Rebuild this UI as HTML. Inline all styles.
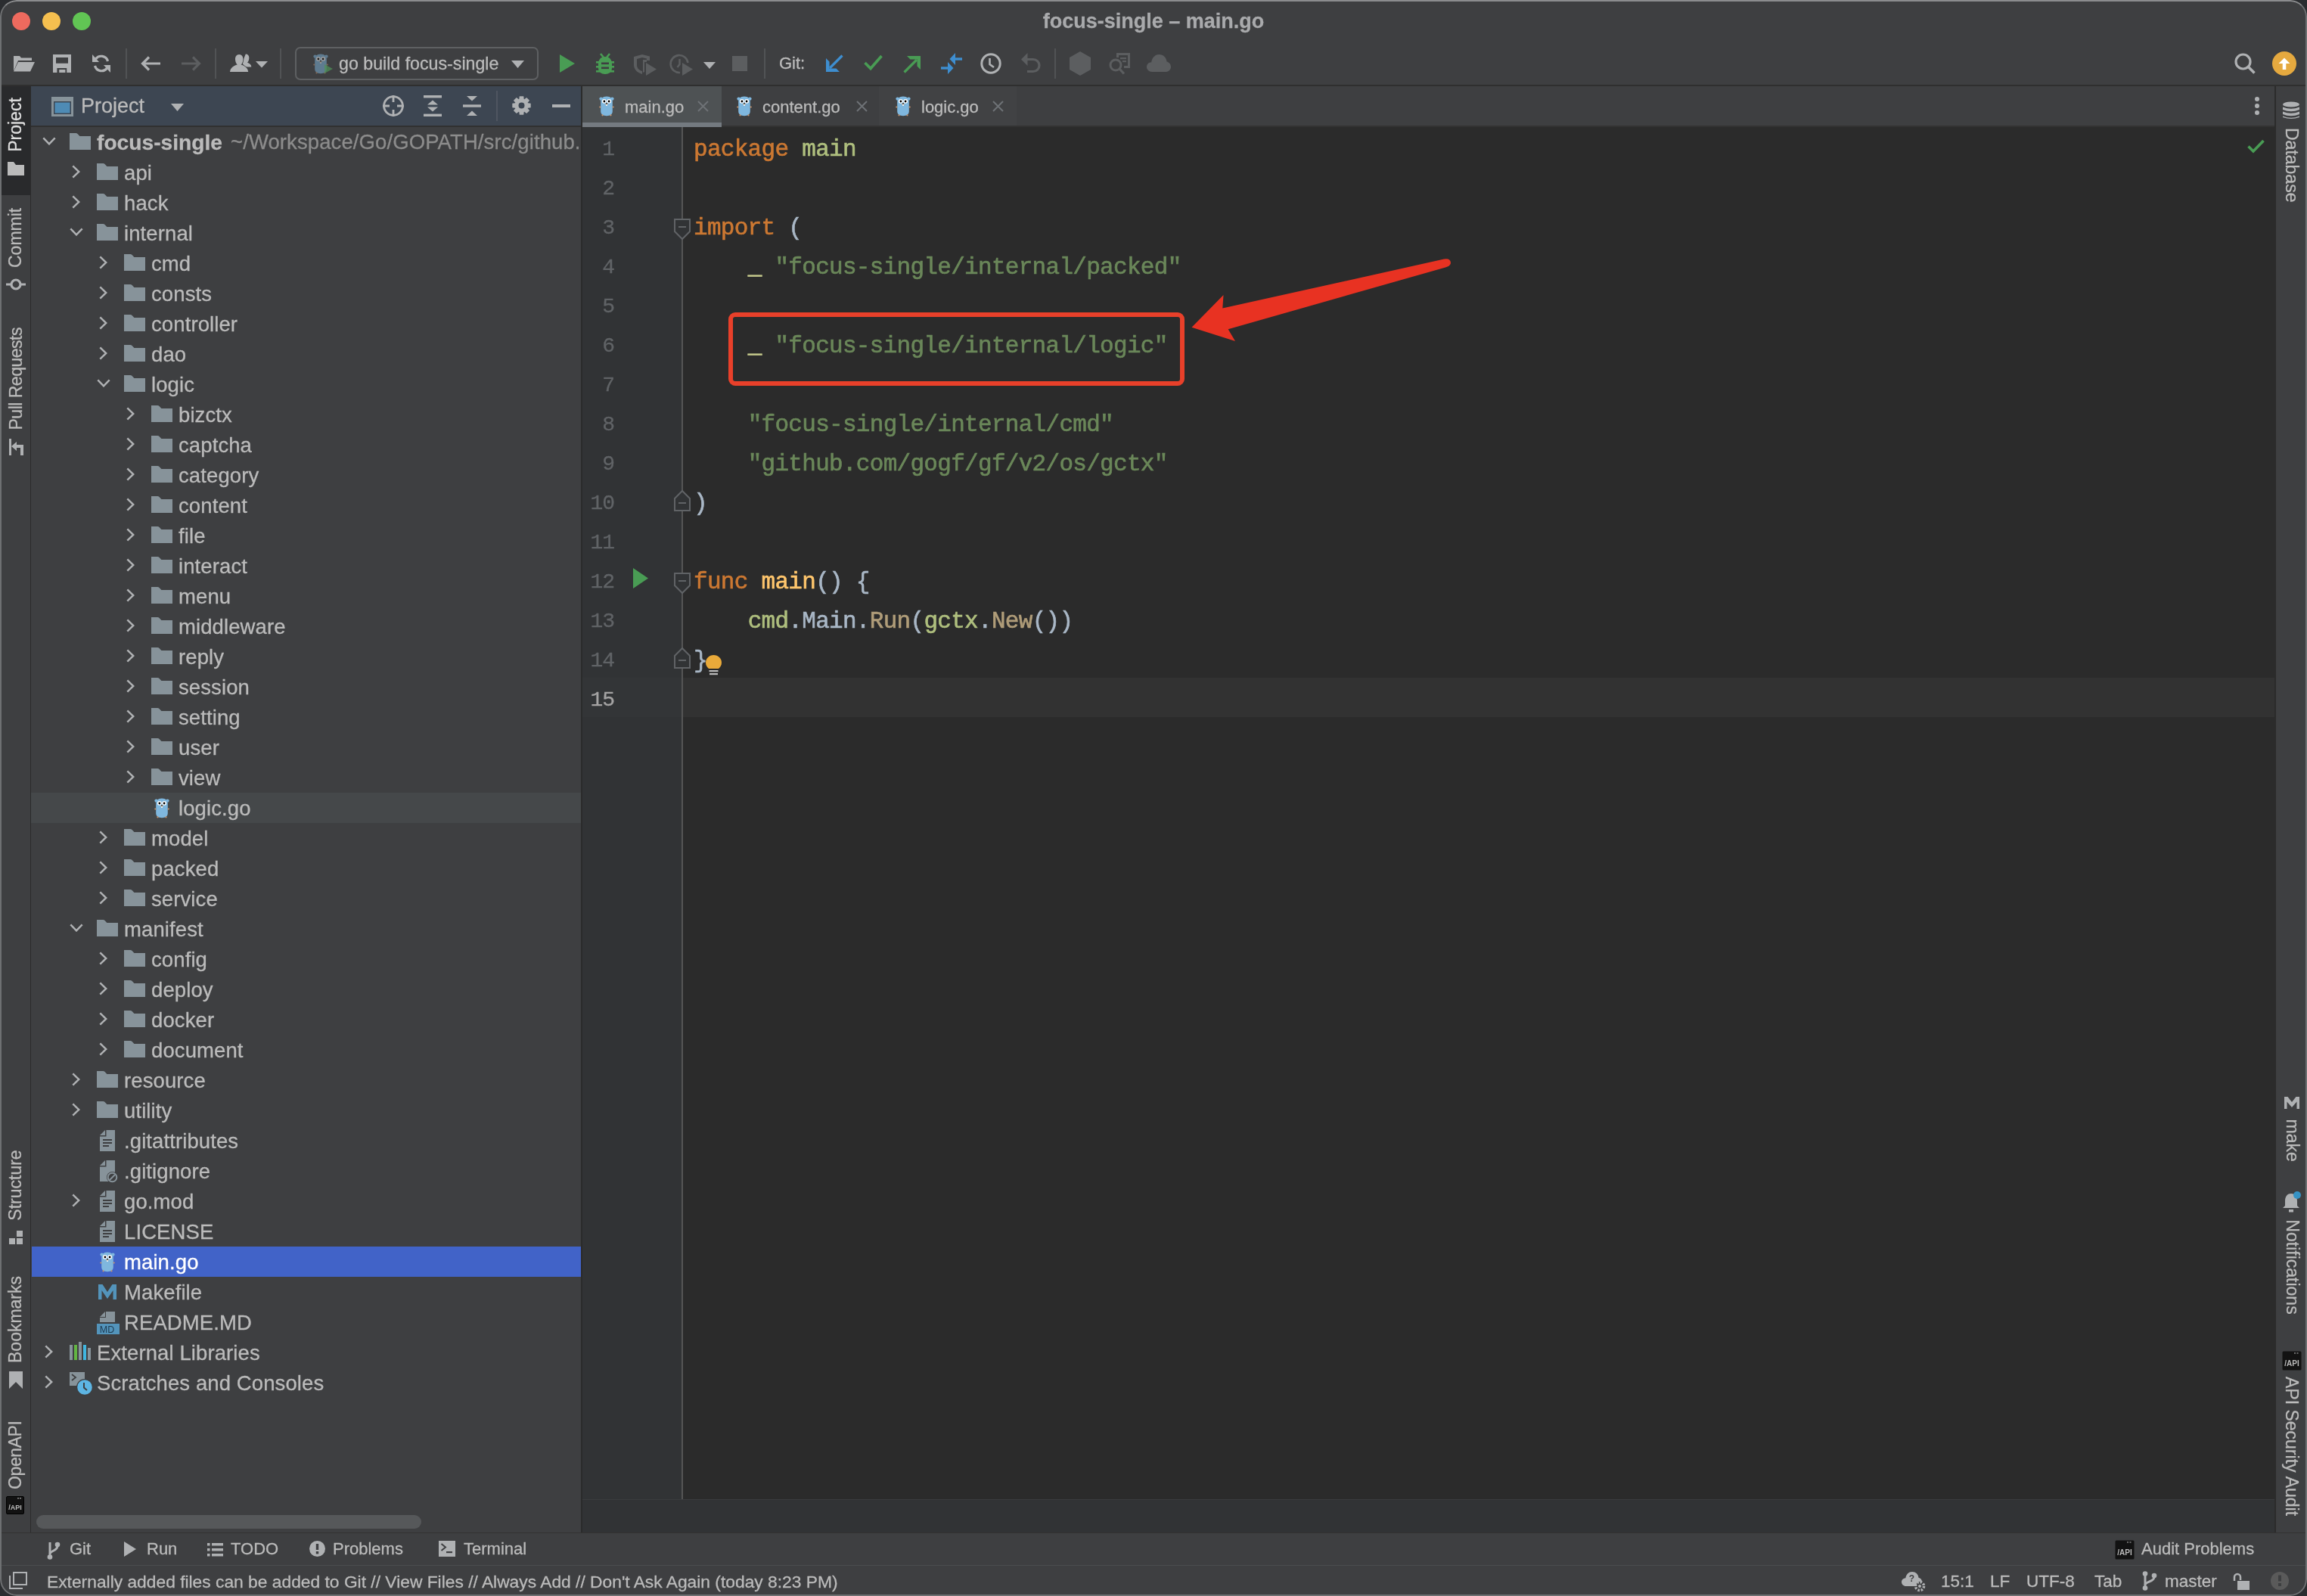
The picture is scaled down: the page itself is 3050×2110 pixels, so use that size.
<!DOCTYPE html>
<html><head><meta charset="utf-8"><title>focus-single – main.go</title>
<style>
html,body{margin:0;padding:0;width:3050px;height:2110px;overflow:hidden;background:#2b2d30;}
*{box-sizing:border-box;}
.abs{position:absolute;}
#win{position:absolute;left:0;top:0;width:3050px;height:2110px;border-radius:22px;overflow:hidden;background:#3e3f41;will-change:transform;
 font-family:"Liberation Sans", sans-serif;color:#bbbbbb;}
.t{position:absolute;white-space:nowrap;font-family:"Liberation Sans", sans-serif;-webkit-text-stroke:0.3px currentColor;}
.code{position:absolute;white-space:pre;font-family:"Liberation Mono", monospace;font-size:31px;letter-spacing:-0.7px;line-height:52px;-webkit-text-stroke:0.6px currentColor;}
svg{position:absolute;overflow:visible;}
</style></head><body>
<div id="win">
<svg width="0" height="0" style="position:absolute">
<defs>
<symbol id="gopher" viewBox="0 0 20 28">
 <circle cx="2.6" cy="4.6" r="2.2" fill="#7fb7de"/>
 <circle cx="17.4" cy="4.6" r="2.2" fill="#7fb7de"/>
 <path d="M10 1.5 C15.5 1.5 17.8 4.5 17.8 9 L17.8 21 C17.8 25.5 14.5 27.2 10 27.2 C5.5 27.2 2.2 25.5 2.2 21 L2.2 9 C2.2 4.5 4.5 1.5 10 1.5 Z" fill="#7fb7de"/>
 <circle cx="1.3" cy="15.5" r="1.1" fill="#c8946c"/><circle cx="18.7" cy="15.5" r="1.1" fill="#c8946c"/>
 <circle cx="4.5" cy="26.3" r="1.1" fill="#c8946c"/><circle cx="15.5" cy="26.3" r="1.1" fill="#c8946c"/>
 <circle cx="6.8" cy="7.8" r="2.9" fill="#fff"/><circle cx="13.2" cy="7.8" r="2.9" fill="#fff"/>
 <circle cx="6.9" cy="8" r="1.4" fill="#000"/><circle cx="13.1" cy="8" r="1.4" fill="#000"/>
 <ellipse cx="10" cy="11.6" rx="1.6" ry="1.2" fill="#d9b89a"/>
 <ellipse cx="10" cy="10.8" rx="0.9" ry="0.7" fill="#000"/>
 <rect x="9.2" y="12.4" width="1.6" height="1.6" fill="#fff"/>
</symbol>
<symbol id="folder" viewBox="0 0 28 22">
 <path d="M0 0 H8.3 Q9.6 0 10.6 1.1 L13.4 3.9 H28 V22 H0 Z" fill="#87939a"/>
</symbol>
<symbol id="file" viewBox="0 0 20 28">
 <path d="M8.5 0 H20 V28 H0 V8.5 H8.5 Z" fill="#87939a"/>
 <path d="M0 7 L7 0 V7 Z" fill="#87939a"/>
 <rect x="4" y="12" width="12" height="2" fill="#3e3f41"/>
 <rect x="4" y="16" width="12" height="2" fill="#3e3f41"/>
 <rect x="4" y="20" width="8" height="2" fill="#3e3f41"/>
</symbol>
<symbol id="chevr" viewBox="0 0 11 18"><path d="M1.3 1.3 L9.3 9 L1.3 16.7" fill="none" stroke="#afb1b3" stroke-width="2.5"/></symbol>
<symbol id="chevd" viewBox="0 0 18 11"><path d="M1.3 1.3 L9 9.3 L16.7 1.3" fill="none" stroke="#afb1b3" stroke-width="2.5"/></symbol>
</defs></svg>
<div class="abs" style="left:0;top:0;width:3050px;height:2110px;border:2px solid #6e7072;border-top-color:#8b8c8e;border-radius:22px;z-index:50;pointer-events:none"></div><div class="abs" style="left:16px;top:16px;width:24px;height:24px;border-radius:50%;background:#ee6a5e"></div><div class="abs" style="left:56px;top:16px;width:24px;height:24px;border-radius:50%;background:#f5bf4f"></div><div class="abs" style="left:96px;top:16px;width:24px;height:24px;border-radius:50%;background:#61c554"></div><div class="t" style="left:0;width:3050px;top:10px;text-align:center;font-weight:bold;font-size:27px;line-height:36px;color:#a9aaac">focus-single – main.go</div><div class="abs" style="left:0;top:112px;width:3050px;height:2px;background:#2f2f2f"></div><svg style="left:18px;top:74px" width="28" height="21" viewBox="0 0 28 21"><path d="M0 0 H8 L10 2.5 H24 V6 H6 L0 20 Z" fill="#afb1b3"/><path d="M6 8 H28 L22 20.5 H0 Z" fill="#afb1b3"/></svg><svg style="left:70px;top:72px" width="24" height="24" viewBox="0 0 24 24"><path d="M0 0 H24 V24 H0 Z M4 4 V11.7 H20 V4 Z M5.4 18 V24 H18.2 V18 Z" fill="#afb1b3" fill-rule="evenodd"/><rect x="8.2" y="20" width="8.2" height="4" fill="#afb1b3"/></svg><svg style="left:122px;top:72px" width="24" height="24" viewBox="0 0 24 24"><path d="M20.5 9 A9 9 0 0 0 4.5 6" fill="none" stroke="#afb1b3" stroke-width="3.2"/><path d="M0 0 L0 10 L9 10 Z" fill="#afb1b3"/><path d="M3.5 15 A9 9 0 0 0 19.5 18" fill="none" stroke="#afb1b3" stroke-width="3.2"/><path d="M24 24 L24 14 L15 14 Z" fill="#afb1b3"/></svg><div class="abs" style="left:166px;top:64px;width:2px;height:40px;background:#515355"></div><div class="abs" style="left:284px;top:64px;width:2px;height:40px;background:#515355"></div><div class="abs" style="left:370px;top:64px;width:2px;height:40px;background:#515355"></div><div class="abs" style="left:1010px;top:64px;width:2px;height:40px;background:#515355"></div><div class="abs" style="left:1394px;top:64px;width:2px;height:40px;background:#515355"></div><svg style="left:186px;top:74px" width="26" height="20" viewBox="0 0 26 20"><path d="M26 10 H3 M11 1.5 L2.5 10 L11 18.5" fill="none" stroke="#afb1b3" stroke-width="3.2"/></svg><svg style="left:240px;top:74px" width="26" height="20" viewBox="0 0 26 20"><path d="M0 10 H23 M15 1.5 L23.5 10 L15 18.5" fill="none" stroke="#5c5e60" stroke-width="3.2"/></svg><svg style="left:304px;top:71px" width="50" height="25" viewBox="0 0 50 25"><path d="M20.8 0.5 C24 0.5 25.6 3 25.3 6.3 C25.1 8.8 24.2 10.6 23 11.8 C26.2 12.8 28.3 14.8 28.3 17.5 H20 L16 12 Z" fill="#afb1b3"/><path d="M12.2 1 C15.8 1 17.6 4 17.4 7.8 C17.2 11 16 13.3 14.6 14.6 C19.5 16 23.5 18.5 24.2 24 H0 C0.7 18.5 4.7 16 9.8 14.6 C8.4 13.3 7.2 11 7 7.8 C6.8 4 8.6 1 12.2 1 Z" fill="#afb1b3" stroke="#3e3f41" stroke-width="1.8" paint-order="stroke"/><path d="M34 10 H50 L42 18.5 Z" fill="#afb1b3"/></svg><div class="abs" style="left:390px;top:62px;width:322px;height:44px;border:2px solid #5e6062;border-radius:7px"></div><svg style="left:414px;top:70px" width="26" height="28" viewBox="0 0 26 28"><use href="#gopher" x="0" y="0" width="20" height="28" style="opacity:0.5"/><path d="M15 15 L26 21 L15 27 Z" fill="#4f8f58" opacity="0.75"/></svg><div class="t" style="left:448px;top:64px;font-size:23.2px;line-height:40px;color:#bbbbbb">go build focus-single</div><svg style="left:676px;top:80px" width="17" height="10" viewBox="0 0 17 10"><path d="M0 0 H17 L8.5 10 Z" fill="#afb1b3"/></svg><svg style="left:740px;top:72px" width="20" height="24" viewBox="0 0 20 24"><path d="M0 0 L20 12 L0 24 Z" fill="#499c54"/></svg><svg style="left:788px;top:70px" width="24" height="28" viewBox="0 0 24 28"><path d="M6 1 L10 6 M18 1 L14 6" stroke="#499c54" stroke-width="2.6" fill="none"/>
<path d="M12 5 C18 5 21 9 21 15 L21 20 C21 25 17 28 12 28 C7 28 3 25 3 20 L3 15 C3 9 6 5 12 5 Z" fill="#499c54"/>
<rect x="0" y="11" width="24" height="2.6" fill="#499c54"/><rect x="0" y="17" width="24" height="2.6" fill="#499c54"/><rect x="0" y="23" width="24" height="2.6" fill="#499c54"/>
<rect x="7" y="12.5" width="10" height="2.6" fill="#3e3f41"/><rect x="7" y="18.5" width="10" height="2.6" fill="#3e3f41"/></svg><svg style="left:838px;top:72px" width="30" height="28" viewBox="0 0 30 28"><path d="M11 0 L21 2.5 V8 H17 V5.5 L11 4 L4 6 V14 C4 18 7 21 11 22 L11 26 C4 24 0 19 0 14 V3 Z" fill="#5c5e60"/><path d="M12 7 H17 V10 H14 V23 L12 24 Z" fill="#5c5e60"/><path d="M16 11 L30 19.5 L16 28 Z" fill="#5c5e60"/></svg><svg style="left:886px;top:72px" width="30" height="28" viewBox="0 0 30 28"><path d="M13 24 A11.5 11.5 0 1 1 23.5 11" fill="none" stroke="#5c5e60" stroke-width="2.6"/><path d="M12.5 6 V13 L9.5 17" fill="none" stroke="#5c5e60" stroke-width="2.4"/><path d="M16 11 L30 19.5 L16 28 Z" fill="#5c5e60"/></svg><svg style="left:930px;top:82px" width="16" height="9" viewBox="0 0 16 9"><path d="M0 0 H16 L8 9 Z" fill="#afb1b3"/></svg><div class="abs" style="left:968px;top:74px;width:20px;height:20px;background:#5c5e60"></div><div class="t" style="left:1030px;top:64px;font-size:22px;line-height:40px;color:#bbbbbb">Git:</div><svg style="left:1092px;top:72px" width="23" height="23" viewBox="0 0 23 23"><path d="M21.5 1.5 L5 18" stroke="#3e8ed0" stroke-width="3.2" fill="none"/><path d="M0 5 V23 H18 L13.5 18.5 H4.5 V9.5 Z" fill="#3e8ed0"/></svg><svg style="left:1142px;top:72px" width="25" height="22" viewBox="0 0 25 22"><path d="M1.5 11 L9 18.5 L23.5 2" stroke="#499c54" stroke-width="3.6" fill="none"/></svg><svg style="left:1194px;top:74px" width="23" height="23" viewBox="0 0 23 23"><path d="M1.5 21.5 L18 5" stroke="#499c54" stroke-width="3.2" fill="none"/><path d="M5 0 H23 V18 L18.5 13.5 V4.5 H9.5 Z" fill="#499c54"/></svg><svg style="left:1244px;top:70px" width="28" height="28" viewBox="0 0 28 28"><path d="M28 8 H17" stroke="#3e8ed0" stroke-width="3.4"/><path d="M19 0 V16 L11.5 8 Z" fill="#3e8ed0"/><path d="M0 20 H11" stroke="#3e8ed0" stroke-width="3.4"/><path d="M9 12 V28 L16.5 20 Z" fill="#3e8ed0"/></svg><svg style="left:1296px;top:70px" width="28" height="28" viewBox="0 0 28 28"><circle cx="14" cy="14" r="12.2" fill="none" stroke="#afb1b3" stroke-width="3"/><path d="M12.5 7 V15 L18 19" fill="none" stroke="#afb1b3" stroke-width="2.6"/></svg><svg style="left:1350px;top:70px" width="26" height="26" viewBox="0 0 26 26"><path d="M0 8.5 L8.5 0 V17 Z" fill="#5c5e60"/><path d="M7 8.5 H16 A8 8 0 0 1 16 24.5 H8" fill="none" stroke="#5c5e60" stroke-width="3.2"/></svg><svg style="left:1414px;top:68px" width="28" height="32" viewBox="0 0 28 32"><path d="M14 0 L28 8 V24 L14 32 L0 24 V8 Z" fill="#5c5e60"/></svg><svg style="left:1466px;top:70px" width="28" height="29" viewBox="0 0 28 29"><path d="M10 0 H28 V20 H20 V17 H25 V3 H13 V6 H10 Z" fill="#5c5e60"/><rect x="15" y="6" width="8" height="2.2" fill="#5c5e60"/><rect x="18" y="10" width="5" height="2.2" fill="#5c5e60"/><circle cx="9" cy="16" r="7" fill="none" stroke="#5c5e60" stroke-width="3"/><path d="M14 21 L20 27.5" stroke="#5c5e60" stroke-width="3.2"/></svg><svg style="left:1516px;top:72px" width="32" height="23" viewBox="0 0 32 23"><path d="M7 23 C3 23 0 20 0 16.5 C0 13 2.8 10.3 6.2 10.2 C6.8 4.5 11 0 16.5 0 C22 0 26 4 26.5 9.6 C29.7 10.3 32 13 32 16.5 C32 20 29 23 25.5 23 Z" fill="#5c5e60"/></svg><svg style="left:2954px;top:70px" width="28" height="28" viewBox="0 0 28 28"><circle cx="11.5" cy="11.5" r="9.5" fill="none" stroke="#afb1b3" stroke-width="3.2"/><path d="M18 18 L26.5 26.5" stroke="#afb1b3" stroke-width="3.6"/></svg><svg style="left:3004px;top:68px" width="32" height="32" viewBox="0 0 32 32"><circle cx="16" cy="16" r="16" fill="#e5a93f"/><path d="M16 8.5 L23.5 16 H18.3 V24 H13.7 V16 H8.5 Z" fill="#fff"/></svg><div class="abs" style="left:0;top:114px;width:40px;height:1912px;background:#3e3f41"></div><div class="abs" style="left:40px;top:114px;width:1px;height:1912px;background:#2b2b2b"></div><div class="abs" style="left:2px;top:114px;width:38px;height:144px;background:#292a2c"></div><div class="t" style="left:-17.0px;top:150.0px;width:74px;height:30px;line-height:30px;text-align:center;font-size:23px;letter-spacing:0px;color:#e0e0e0;transform:rotate(-90deg)">Project</div><svg style="left:10px;top:214px" width="22" height="18" viewBox="0 0 22 18"><path d="M0 0 H8 L11 4 H22 V18 H0 Z" fill="#bbbbbb"/></svg><div class="t" style="left:-19.0px;top:300.0px;width:78px;height:30px;line-height:30px;text-align:center;font-size:23px;letter-spacing:0px;color:#bbbbbb;transform:rotate(-90deg)">Commit</div><svg style="left:8px;top:368px" width="26" height="16" viewBox="0 0 26 16"><path d="M0 8 H26" stroke="#afb1b3" stroke-width="3"/><circle cx="13" cy="8" r="6" fill="#3e3f41" stroke="#afb1b3" stroke-width="3.2"/></svg><div class="t" style="left:-47.5px;top:485.5px;width:135px;height:30px;line-height:30px;text-align:center;font-size:23px;letter-spacing:-0.5px;color:#bbbbbb;transform:rotate(-90deg)">Pull Requests</div><svg style="left:12px;top:580px" width="20" height="22" viewBox="0 0 20 22"><path d="M1.5 0 V22" stroke="#afb1b3" stroke-width="3"/><path d="M3 10 L10 4 V8 H19 V22 H15 V12 H10 V16 Z" fill="#afb1b3"/></svg><div class="t" style="left:-27.0px;top:1552.0px;width:94px;height:30px;line-height:30px;text-align:center;font-size:23px;letter-spacing:0px;color:#bbbbbb;transform:rotate(-90deg)">Structure</div><svg style="left:12px;top:1627px" width="18" height="19" viewBox="0 0 18 19"><rect x="0" y="10" width="8" height="8" fill="#afb1b3"/><rect x="10" y="10" width="8" height="8" fill="#afb1b3"/><rect x="10" y="0" width="8" height="8" fill="#afb1b3"/></svg><div class="t" style="left:-36.0px;top:1731.0px;width:112px;height:30px;line-height:30px;text-align:center;font-size:23px;letter-spacing:0px;color:#bbbbbb;transform:rotate(-90deg)">Bookmarks</div><svg style="left:12px;top:1813px" width="18" height="23" viewBox="0 0 18 23"><path d="M0 0 H18 V23 L9 14 L0 23 Z" fill="#afb1b3"/></svg><div class="t" style="left:-24.0px;top:1910.0px;width:88px;height:30px;line-height:30px;text-align:center;font-size:23px;letter-spacing:-0.4px;color:#bbbbbb;transform:rotate(-90deg)">OpenAPI</div><svg style="left:8px;top:1978px" width="24" height="24" viewBox="0 0 24 24"><rect x="0.5" y="0.5" width="23" height="23" rx="1.5" fill="#121212" stroke="#000" stroke-width="1"/><rect x="2" y="5" width="20" height="17" fill="#3e3f41" opacity="0"/><text x="12" y="18" font-size="9" font-family="Liberation Sans" font-weight="bold" fill="#bbbbbb" text-anchor="middle">/API</text><rect x="15" y="2" width="2" height="1.5" fill="#888"/><rect x="18" y="2" width="2" height="1.5" fill="#888"/></svg><div class="abs" style="left:41px;top:114px;width:727px;height:52px;background:#3d4652"></div><div class="abs" style="left:41px;top:166px;width:727px;height:2px;background:#303030"></div><svg style="left:68px;top:128px" width="29" height="26" viewBox="0 0 29 26"><rect x="0" y="0" width="29" height="26" fill="#87939a"/><rect x="3" y="6" width="23" height="17" fill="#3d4652"/><rect x="4.5" y="7.5" width="20" height="14" fill="#4e8bb5"/></svg><div class="t" style="left:107px;top:120px;font-size:27px;line-height:40px;color:#bbbbbb">Project</div><svg style="left:226px;top:137px" width="17" height="10" viewBox="0 0 17 10"><path d="M0 0 H17 L8.5 10 Z" fill="#afb1b3"/></svg><svg style="left:506px;top:126px" width="28" height="28" viewBox="0 0 28 28"><circle cx="14" cy="14" r="12.4" fill="none" stroke="#afb1b3" stroke-width="2.8"/><path d="M14 0 V9 M14 19 V28 M0 14 H9 M19 14 H28" stroke="#afb1b3" stroke-width="2.8"/></svg><svg style="left:560px;top:126px" width="24" height="28" viewBox="0 0 24 28"><rect x="0" y="0" width="24" height="3.4" fill="#afb1b3"/><rect x="0" y="24.6" width="24" height="3.4" fill="#afb1b3"/><path d="M12 6.5 L19 12.5 H5 Z M12 21.5 L19 15.5 H5 Z" fill="#afb1b3"/></svg><svg style="left:612px;top:127px" width="24" height="26" viewBox="0 0 24 26"><rect x="0" y="11.3" width="24" height="3.4" fill="#afb1b3"/><path d="M5 0 H19 L12 6.5 Z M5 26 H19 L12 19.5 Z" fill="#afb1b3"/></svg><div class="abs" style="left:656px;top:120px;width:2px;height:40px;background:#4f5560"></div><svg style="left:677px;top:127px" width="25" height="25" viewBox="0 0 25 25"><path d="M24.70 9.77 L24.70 15.23 L20.92 15.67 L20.70 16.21 L23.05 19.20 L19.20 23.05 L16.21 20.70 L15.67 20.92 L15.23 24.70 L9.77 24.70 L9.33 20.92 L8.79 20.70 L5.80 23.05 L1.95 19.20 L4.30 16.21 L4.08 15.67 L0.30 15.23 L0.30 9.77 L4.08 9.33 L4.30 8.79 L1.95 5.80 L5.80 1.95 L8.79 4.30 L9.33 4.08 L9.77 0.30 L15.23 0.30 L15.67 4.08 L16.21 4.30 L19.20 1.95 L23.05 5.80 L20.70 8.79 L20.92 9.33 Z M12.5 8.5 A4 4 0 1 0 12.5 16.5 A4 4 0 1 0 12.5 8.5 Z" fill="#afb1b3" fill-rule="evenodd"/></svg><div class="abs" style="left:730px;top:138px;width:24px;height:4px;background:#afb1b3"></div><div class="abs" style="left:41px;top:168px;width:727px;height:1858px;overflow:hidden"><svg style="left:15px;top:13px" width="18" height="11"><use href="#chevd" width="18" height="11"/></svg><svg style="left:51px;top:8px" width="28" height="22"><use href="#folder" width="28" height="22"/></svg><div class="t" style="left:87px;top:0px;font-size:28.2px;font-weight:bold;line-height:40px;color:#bbbbbb">focus-single</div><div class="t" style="left:264px;top:0px;font-size:27.5px;letter-spacing:0.1px;line-height:40px;color:#8c8c8c">~/Workspace/Go/GOPATH/src/github.com/gogf/focus-single</div><svg style="left:54px;top:50px" width="11" height="18"><use href="#chevr" width="11" height="18"/></svg><svg style="left:87px;top:48px" width="28" height="22"><use href="#folder" width="28" height="22"/></svg><div class="t" style="left:123px;top:41px;font-size:27.5px;letter-spacing:0.1px;line-height:40px;color:#bbbbbb">api</div><svg style="left:54px;top:90px" width="11" height="18"><use href="#chevr" width="11" height="18"/></svg><svg style="left:87px;top:88px" width="28" height="22"><use href="#folder" width="28" height="22"/></svg><div class="t" style="left:123px;top:81px;font-size:27.5px;letter-spacing:0.1px;line-height:40px;color:#bbbbbb">hack</div><svg style="left:51px;top:133px" width="18" height="11"><use href="#chevd" width="18" height="11"/></svg><svg style="left:87px;top:128px" width="28" height="22"><use href="#folder" width="28" height="22"/></svg><div class="t" style="left:123px;top:121px;font-size:27.5px;letter-spacing:0.1px;line-height:40px;color:#bbbbbb">internal</div><svg style="left:90px;top:170px" width="11" height="18"><use href="#chevr" width="11" height="18"/></svg><svg style="left:123px;top:168px" width="28" height="22"><use href="#folder" width="28" height="22"/></svg><div class="t" style="left:159px;top:161px;font-size:27.5px;letter-spacing:0.1px;line-height:40px;color:#bbbbbb">cmd</div><svg style="left:90px;top:210px" width="11" height="18"><use href="#chevr" width="11" height="18"/></svg><svg style="left:123px;top:208px" width="28" height="22"><use href="#folder" width="28" height="22"/></svg><div class="t" style="left:159px;top:201px;font-size:27.5px;letter-spacing:0.1px;line-height:40px;color:#bbbbbb">consts</div><svg style="left:90px;top:250px" width="11" height="18"><use href="#chevr" width="11" height="18"/></svg><svg style="left:123px;top:248px" width="28" height="22"><use href="#folder" width="28" height="22"/></svg><div class="t" style="left:159px;top:241px;font-size:27.5px;letter-spacing:0.1px;line-height:40px;color:#bbbbbb">controller</div><svg style="left:90px;top:290px" width="11" height="18"><use href="#chevr" width="11" height="18"/></svg><svg style="left:123px;top:288px" width="28" height="22"><use href="#folder" width="28" height="22"/></svg><div class="t" style="left:159px;top:281px;font-size:27.5px;letter-spacing:0.1px;line-height:40px;color:#bbbbbb">dao</div><svg style="left:87px;top:333px" width="18" height="11"><use href="#chevd" width="18" height="11"/></svg><svg style="left:123px;top:328px" width="28" height="22"><use href="#folder" width="28" height="22"/></svg><div class="t" style="left:159px;top:321px;font-size:27.5px;letter-spacing:0.1px;line-height:40px;color:#bbbbbb">logic</div><svg style="left:126px;top:370px" width="11" height="18"><use href="#chevr" width="11" height="18"/></svg><svg style="left:159px;top:368px" width="28" height="22"><use href="#folder" width="28" height="22"/></svg><div class="t" style="left:195px;top:361px;font-size:27.5px;letter-spacing:0.1px;line-height:40px;color:#bbbbbb">bizctx</div><svg style="left:126px;top:410px" width="11" height="18"><use href="#chevr" width="11" height="18"/></svg><svg style="left:159px;top:408px" width="28" height="22"><use href="#folder" width="28" height="22"/></svg><div class="t" style="left:195px;top:401px;font-size:27.5px;letter-spacing:0.1px;line-height:40px;color:#bbbbbb">captcha</div><svg style="left:126px;top:450px" width="11" height="18"><use href="#chevr" width="11" height="18"/></svg><svg style="left:159px;top:448px" width="28" height="22"><use href="#folder" width="28" height="22"/></svg><div class="t" style="left:195px;top:441px;font-size:27.5px;letter-spacing:0.1px;line-height:40px;color:#bbbbbb">category</div><svg style="left:126px;top:490px" width="11" height="18"><use href="#chevr" width="11" height="18"/></svg><svg style="left:159px;top:488px" width="28" height="22"><use href="#folder" width="28" height="22"/></svg><div class="t" style="left:195px;top:481px;font-size:27.5px;letter-spacing:0.1px;line-height:40px;color:#bbbbbb">content</div><svg style="left:126px;top:530px" width="11" height="18"><use href="#chevr" width="11" height="18"/></svg><svg style="left:159px;top:528px" width="28" height="22"><use href="#folder" width="28" height="22"/></svg><div class="t" style="left:195px;top:521px;font-size:27.5px;letter-spacing:0.1px;line-height:40px;color:#bbbbbb">file</div><svg style="left:126px;top:570px" width="11" height="18"><use href="#chevr" width="11" height="18"/></svg><svg style="left:159px;top:568px" width="28" height="22"><use href="#folder" width="28" height="22"/></svg><div class="t" style="left:195px;top:561px;font-size:27.5px;letter-spacing:0.1px;line-height:40px;color:#bbbbbb">interact</div><svg style="left:126px;top:610px" width="11" height="18"><use href="#chevr" width="11" height="18"/></svg><svg style="left:159px;top:608px" width="28" height="22"><use href="#folder" width="28" height="22"/></svg><div class="t" style="left:195px;top:601px;font-size:27.5px;letter-spacing:0.1px;line-height:40px;color:#bbbbbb">menu</div><svg style="left:126px;top:650px" width="11" height="18"><use href="#chevr" width="11" height="18"/></svg><svg style="left:159px;top:648px" width="28" height="22"><use href="#folder" width="28" height="22"/></svg><div class="t" style="left:195px;top:641px;font-size:27.5px;letter-spacing:0.1px;line-height:40px;color:#bbbbbb">middleware</div><svg style="left:126px;top:690px" width="11" height="18"><use href="#chevr" width="11" height="18"/></svg><svg style="left:159px;top:688px" width="28" height="22"><use href="#folder" width="28" height="22"/></svg><div class="t" style="left:195px;top:681px;font-size:27.5px;letter-spacing:0.1px;line-height:40px;color:#bbbbbb">reply</div><svg style="left:126px;top:730px" width="11" height="18"><use href="#chevr" width="11" height="18"/></svg><svg style="left:159px;top:728px" width="28" height="22"><use href="#folder" width="28" height="22"/></svg><div class="t" style="left:195px;top:721px;font-size:27.5px;letter-spacing:0.1px;line-height:40px;color:#bbbbbb">session</div><svg style="left:126px;top:770px" width="11" height="18"><use href="#chevr" width="11" height="18"/></svg><svg style="left:159px;top:768px" width="28" height="22"><use href="#folder" width="28" height="22"/></svg><div class="t" style="left:195px;top:761px;font-size:27.5px;letter-spacing:0.1px;line-height:40px;color:#bbbbbb">setting</div><svg style="left:126px;top:810px" width="11" height="18"><use href="#chevr" width="11" height="18"/></svg><svg style="left:159px;top:808px" width="28" height="22"><use href="#folder" width="28" height="22"/></svg><div class="t" style="left:195px;top:801px;font-size:27.5px;letter-spacing:0.1px;line-height:40px;color:#bbbbbb">user</div><svg style="left:126px;top:850px" width="11" height="18"><use href="#chevr" width="11" height="18"/></svg><svg style="left:159px;top:848px" width="28" height="22"><use href="#folder" width="28" height="22"/></svg><div class="t" style="left:195px;top:841px;font-size:27.5px;letter-spacing:0.1px;line-height:40px;color:#bbbbbb">view</div><div class="abs" style="left:0px;top:880px;width:727px;height:40px;background:#45484a"></div><svg style="left:163px;top:886px" width="20" height="28"><use href="#gopher" width="20" height="28"/></svg><div class="t" style="left:195px;top:881px;font-size:27.5px;letter-spacing:0.1px;line-height:40px;color:#bbbbbb">logic.go</div><svg style="left:90px;top:930px" width="11" height="18"><use href="#chevr" width="11" height="18"/></svg><svg style="left:123px;top:928px" width="28" height="22"><use href="#folder" width="28" height="22"/></svg><div class="t" style="left:159px;top:921px;font-size:27.5px;letter-spacing:0.1px;line-height:40px;color:#bbbbbb">model</div><svg style="left:90px;top:970px" width="11" height="18"><use href="#chevr" width="11" height="18"/></svg><svg style="left:123px;top:968px" width="28" height="22"><use href="#folder" width="28" height="22"/></svg><div class="t" style="left:159px;top:961px;font-size:27.5px;letter-spacing:0.1px;line-height:40px;color:#bbbbbb">packed</div><svg style="left:90px;top:1010px" width="11" height="18"><use href="#chevr" width="11" height="18"/></svg><svg style="left:123px;top:1008px" width="28" height="22"><use href="#folder" width="28" height="22"/></svg><div class="t" style="left:159px;top:1001px;font-size:27.5px;letter-spacing:0.1px;line-height:40px;color:#bbbbbb">service</div><svg style="left:51px;top:1053px" width="18" height="11"><use href="#chevd" width="18" height="11"/></svg><svg style="left:87px;top:1048px" width="28" height="22"><use href="#folder" width="28" height="22"/></svg><div class="t" style="left:123px;top:1041px;font-size:27.5px;letter-spacing:0.1px;line-height:40px;color:#bbbbbb">manifest</div><svg style="left:90px;top:1090px" width="11" height="18"><use href="#chevr" width="11" height="18"/></svg><svg style="left:123px;top:1088px" width="28" height="22"><use href="#folder" width="28" height="22"/></svg><div class="t" style="left:159px;top:1081px;font-size:27.5px;letter-spacing:0.1px;line-height:40px;color:#bbbbbb">config</div><svg style="left:90px;top:1130px" width="11" height="18"><use href="#chevr" width="11" height="18"/></svg><svg style="left:123px;top:1128px" width="28" height="22"><use href="#folder" width="28" height="22"/></svg><div class="t" style="left:159px;top:1121px;font-size:27.5px;letter-spacing:0.1px;line-height:40px;color:#bbbbbb">deploy</div><svg style="left:90px;top:1170px" width="11" height="18"><use href="#chevr" width="11" height="18"/></svg><svg style="left:123px;top:1168px" width="28" height="22"><use href="#folder" width="28" height="22"/></svg><div class="t" style="left:159px;top:1161px;font-size:27.5px;letter-spacing:0.1px;line-height:40px;color:#bbbbbb">docker</div><svg style="left:90px;top:1210px" width="11" height="18"><use href="#chevr" width="11" height="18"/></svg><svg style="left:123px;top:1208px" width="28" height="22"><use href="#folder" width="28" height="22"/></svg><div class="t" style="left:159px;top:1201px;font-size:27.5px;letter-spacing:0.1px;line-height:40px;color:#bbbbbb">document</div><svg style="left:54px;top:1250px" width="11" height="18"><use href="#chevr" width="11" height="18"/></svg><svg style="left:87px;top:1248px" width="28" height="22"><use href="#folder" width="28" height="22"/></svg><div class="t" style="left:123px;top:1241px;font-size:27.5px;letter-spacing:0.1px;line-height:40px;color:#bbbbbb">resource</div><svg style="left:54px;top:1290px" width="11" height="18"><use href="#chevr" width="11" height="18"/></svg><svg style="left:87px;top:1288px" width="28" height="22"><use href="#folder" width="28" height="22"/></svg><div class="t" style="left:123px;top:1281px;font-size:27.5px;letter-spacing:0.1px;line-height:40px;color:#bbbbbb">utility</div><svg style="left:91px;top:1326px" width="20" height="28"><use href="#file" width="20" height="28"/></svg><div class="t" style="left:123px;top:1321px;font-size:27.5px;letter-spacing:0.1px;line-height:40px;color:#bbbbbb">.gitattributes</div><svg style="left:91px;top:1366px" width="26" height="30" viewBox="0 0 26 30"><path d="M8.5 0 H20 V28 H0 V8.5 H8.5 Z" fill="#87939a"/><path d="M0 7 L7 0 V7 Z" fill="#87939a"/><circle cx="16.5" cy="22.5" r="7.5" fill="#3e3f41"/><circle cx="16.5" cy="22.5" r="5.8" fill="none" stroke="#87939a" stroke-width="2"/><path d="M13 26 L20 19" stroke="#87939a" stroke-width="2"/></svg><div class="t" style="left:123px;top:1361px;font-size:27.5px;letter-spacing:0.1px;line-height:40px;color:#bbbbbb">.gitignore</div><svg style="left:54px;top:1410px" width="11" height="18"><use href="#chevr" width="11" height="18"/></svg><svg style="left:91px;top:1406px" width="20" height="28"><use href="#file" width="20" height="28"/></svg><div class="t" style="left:123px;top:1401px;font-size:27.5px;letter-spacing:0.1px;line-height:40px;color:#bbbbbb">go.mod</div><svg style="left:91px;top:1446px" width="20" height="28"><use href="#file" width="20" height="28"/></svg><div class="t" style="left:123px;top:1441px;font-size:27.5px;letter-spacing:0.1px;line-height:40px;color:#bbbbbb">LICENSE</div><div class="abs" style="left:1px;top:1480px;width:726px;height:40px;background:#4163c8"></div><svg style="left:91px;top:1486px" width="20" height="28"><use href="#gopher" width="20" height="28"/></svg><div class="t" style="left:123px;top:1481px;font-size:27.5px;letter-spacing:0.1px;line-height:40px;color:#ffffff">main.go</div><svg style="left:89px;top:1530px" width="24" height="20" viewBox="0 0 24 20"><path d="M0 20 V0 H5.5 L12 10 L18.5 0 H24 V20 H19.5 V8 L12 19 L4.5 8 V20 Z" fill="#5394bb"/></svg><div class="t" style="left:123px;top:1521px;font-size:27.5px;letter-spacing:0.1px;line-height:40px;color:#bbbbbb">Makefile</div><svg style="left:87px;top:1566px" width="30" height="30" viewBox="0 0 30 30"><path d="M12 0 H24 V14 H4 V8 H12 Z" fill="#87939a"/><path d="M4 7 L11 0 V7 Z" fill="#87939a"/><rect x="0" y="16" width="30" height="14" fill="#5394bb"/><text x="13.5" y="28" font-size="12.5" font-family="Liberation Sans" fill="#1e3a4f" text-anchor="middle" style="-webkit-text-stroke:0.5px #1e3a4f">MD</text></svg><div class="t" style="left:123px;top:1561px;font-size:27.5px;letter-spacing:0.1px;line-height:40px;color:#bbbbbb">README.MD</div><svg style="left:18px;top:1610px" width="11" height="18"><use href="#chevr" width="11" height="18"/></svg><svg style="left:51px;top:1606px" width="28" height="24" viewBox="0 0 28 24"><rect x="0" y="4" width="4" height="20" fill="#87939a"/><rect x="6" y="4" width="4" height="20" fill="#62b543"/><rect x="12" y="0" width="4" height="24" fill="#87939a"/><rect x="18" y="4" width="4" height="20" fill="#40b6e0"/><rect x="24" y="8" width="4" height="16" fill="#87939a"/></svg><div class="t" style="left:87px;top:1601px;font-size:27.5px;letter-spacing:0.1px;line-height:40px;color:#bbbbbb">External Libraries</div><svg style="left:18px;top:1650px" width="11" height="18"><use href="#chevr" width="11" height="18"/></svg><svg style="left:51px;top:1646px" width="30" height="30" viewBox="0 0 30 30"><rect x="0" y="0" width="20" height="18" fill="#87939a"/><path d="M3 3 L8 7 L3 11" fill="none" stroke="#3e3f41" stroke-width="1.8"/><circle cx="20" cy="20" r="11" fill="#3e3f41"/><circle cx="20" cy="20" r="9.8" fill="#5db5e3"/><path d="M19 14 V20.5 L23 24" fill="none" stroke="#3e3f41" stroke-width="2"/></svg><div class="t" style="left:87px;top:1641px;font-size:27.5px;letter-spacing:0.1px;line-height:40px;color:#bbbbbb">Scratches and Consoles</div></div><div class="abs" style="left:48px;top:2003px;width:509px;height:18px;border-radius:9px;background:#56585a"></div><div class="abs" style="left:768px;top:114px;width:2px;height:1912px;background:#2b2b2b"></div><div class="abs" style="left:770px;top:114px;width:2237px;height:52px;background:#3e3f41"></div><div class="abs" style="left:770px;top:166px;width:2237px;height:2px;background:#323232"></div><div class="abs" style="left:1162px;top:114px;width:182px;height:52px;background:#414244"></div><div class="abs" style="left:770px;top:114px;width:184px;height:54px;background:#4e5254"></div><div class="abs" style="left:770px;top:162px;width:184px;height:6px;background:#747a80"></div><svg style="left:792px;top:126px" width="20" height="28"><use href="#gopher" width="20" height="28"/></svg><div class="t" style="left:826px;top:122px;font-size:22px;line-height:40px;color:#bbbbbb">main.go</div><svg style="left:922px;top:133px" width="15" height="15" viewBox="0 0 15 15"><path d="M1 1 L14 14 M14 1 L1 14" stroke="#6e7276" stroke-width="2"/></svg><svg style="left:974px;top:126px" width="20" height="28"><use href="#gopher" width="20" height="28"/></svg><div class="t" style="left:1008px;top:122px;font-size:22px;line-height:40px;color:#bbbbbb">content.go</div><svg style="left:1132px;top:133px" width="15" height="15" viewBox="0 0 15 15"><path d="M1 1 L14 14 M14 1 L1 14" stroke="#6e7276" stroke-width="2"/></svg><svg style="left:1184px;top:126px" width="20" height="28"><use href="#gopher" width="20" height="28"/></svg><div class="t" style="left:1218px;top:122px;font-size:22px;line-height:40px;color:#bbbbbb">logic.go</div><svg style="left:1312px;top:133px" width="15" height="15" viewBox="0 0 15 15"><path d="M1 1 L14 14 M14 1 L1 14" stroke="#6e7276" stroke-width="2"/></svg><div class="abs" style="left:2981px;top:128px;width:6px;height:6px;border-radius:50%;background:#afb1b3"></div><div class="abs" style="left:2981px;top:137px;width:6px;height:6px;border-radius:50%;background:#afb1b3"></div><div class="abs" style="left:2981px;top:146px;width:6px;height:6px;border-radius:50%;background:#afb1b3"></div><div class="abs" style="left:770px;top:168px;width:132px;height:1814px;background:#313335"></div><div class="abs" style="left:902px;top:168px;width:2105px;height:1814px;background:#2b2b2b"></div><div class="abs" style="left:770px;top:896px;width:132px;height:52px;background:#333537"></div><div class="abs" style="left:902px;top:896px;width:2105px;height:52px;background:#323232"></div><div class="abs" style="left:901px;top:168px;width:2px;height:1814px;background:#555555"></div><div class="abs" style="left:770px;top:1982px;width:2237px;height:44px;background:#313335"></div><div class="abs" style="left:770px;top:1982px;width:2237px;height:1px;background:#3a3c3e"></div><div class="t" style="left:738px;width:74px;text-align:right;top:172px;font-family:'Liberation Mono', monospace;font-size:28px;letter-spacing:-1px;line-height:52px;color:#606366">1</div><div class="t" style="left:738px;width:74px;text-align:right;top:224px;font-family:'Liberation Mono', monospace;font-size:28px;letter-spacing:-1px;line-height:52px;color:#606366">2</div><div class="t" style="left:738px;width:74px;text-align:right;top:276px;font-family:'Liberation Mono', monospace;font-size:28px;letter-spacing:-1px;line-height:52px;color:#606366">3</div><div class="t" style="left:738px;width:74px;text-align:right;top:328px;font-family:'Liberation Mono', monospace;font-size:28px;letter-spacing:-1px;line-height:52px;color:#606366">4</div><div class="t" style="left:738px;width:74px;text-align:right;top:380px;font-family:'Liberation Mono', monospace;font-size:28px;letter-spacing:-1px;line-height:52px;color:#606366">5</div><div class="t" style="left:738px;width:74px;text-align:right;top:432px;font-family:'Liberation Mono', monospace;font-size:28px;letter-spacing:-1px;line-height:52px;color:#606366">6</div><div class="t" style="left:738px;width:74px;text-align:right;top:484px;font-family:'Liberation Mono', monospace;font-size:28px;letter-spacing:-1px;line-height:52px;color:#606366">7</div><div class="t" style="left:738px;width:74px;text-align:right;top:536px;font-family:'Liberation Mono', monospace;font-size:28px;letter-spacing:-1px;line-height:52px;color:#606366">8</div><div class="t" style="left:738px;width:74px;text-align:right;top:588px;font-family:'Liberation Mono', monospace;font-size:28px;letter-spacing:-1px;line-height:52px;color:#606366">9</div><div class="t" style="left:738px;width:74px;text-align:right;top:640px;font-family:'Liberation Mono', monospace;font-size:28px;letter-spacing:-1px;line-height:52px;color:#606366">10</div><div class="t" style="left:738px;width:74px;text-align:right;top:692px;font-family:'Liberation Mono', monospace;font-size:28px;letter-spacing:-1px;line-height:52px;color:#606366">11</div><div class="t" style="left:738px;width:74px;text-align:right;top:744px;font-family:'Liberation Mono', monospace;font-size:28px;letter-spacing:-1px;line-height:52px;color:#606366">12</div><div class="t" style="left:738px;width:74px;text-align:right;top:796px;font-family:'Liberation Mono', monospace;font-size:28px;letter-spacing:-1px;line-height:52px;color:#606366">13</div><div class="t" style="left:738px;width:74px;text-align:right;top:848px;font-family:'Liberation Mono', monospace;font-size:28px;letter-spacing:-1px;line-height:52px;color:#606366">14</div><div class="t" style="left:738px;width:74px;text-align:right;top:900px;font-family:'Liberation Mono', monospace;font-size:28px;letter-spacing:-1px;line-height:52px;color:#a4a3a3">15</div><div class="code" style="left:917px;top:172px"><span style="color:#cc7832">package</span> <span style="color:#afbf7e">main</span></div><div class="code" style="left:917px;top:276px"><span style="color:#cc7832">import</span> <span style="color:#a9b7c6">(</span></div><div class="code" style="left:917px;top:328px">    <span style="color:#c6ca8c">_</span> <span style="color:#6a8759">"focus-single/internal/packed"</span></div><div class="code" style="left:917px;top:432px">    <span style="color:#c6ca8c">_</span> <span style="color:#6a8759">"focus-single/internal/logic"</span></div><div class="code" style="left:917px;top:536px">    <span style="color:#6a8759">"focus-single/internal/cmd"</span></div><div class="code" style="left:917px;top:588px">    <span style="color:#6a8759">"github.com/gogf/gf/v2/os/gctx"</span></div><div class="code" style="left:917px;top:640px"><span style="color:#a9b7c6">)</span></div><div class="code" style="left:917px;top:744px"><span style="color:#cc7832">func</span> <span style="color:#ffc66d">main</span><span style="color:#a9b7c6">() {</span></div><div class="code" style="left:917px;top:796px">    <span style="color:#afbf7e">cmd</span><span style="color:#a9b7c6">.Main.</span><span style="color:#b09d79">Run</span><span style="color:#a9b7c6">(</span><span style="color:#afbf7e">gctx</span><span style="color:#a9b7c6">.</span><span style="color:#b09d79">New</span><span style="color:#a9b7c6">())</span></div><div class="code" style="left:917px;top:848px"><span style="color:#a9b7c6">}</span></div><svg style="left:891px;top:289px" width="22" height="28" viewBox="0 0 22 28"><path d="M1 1 H21 V17 L11 27 L1 17 Z" fill="#313335" stroke="#606366" stroke-width="2"/><path d="M6 11 H16" stroke="#606366" stroke-width="2"/></svg><svg style="left:891px;top:648px" width="22" height="28" viewBox="0 0 22 28"><path d="M1 27 H21 V11 L11 1 L1 11 Z" fill="#313335" stroke="#606366" stroke-width="2"/><path d="M6 17 H16" stroke="#606366" stroke-width="2"/></svg><svg style="left:891px;top:757px" width="22" height="28" viewBox="0 0 22 28"><path d="M1 1 H21 V17 L11 27 L1 17 Z" fill="#313335" stroke="#606366" stroke-width="2"/><path d="M6 11 H16" stroke="#606366" stroke-width="2"/></svg><svg style="left:891px;top:856px" width="22" height="28" viewBox="0 0 22 28"><path d="M1 27 H21 V11 L11 1 L1 11 Z" fill="#313335" stroke="#606366" stroke-width="2"/><path d="M6 17 H16" stroke="#606366" stroke-width="2"/></svg><svg style="left:837px;top:751px" width="20" height="27" viewBox="0 0 20 27"><path d="M0 0 L20 13.5 L0 27 Z" fill="#499c54"/></svg><svg style="left:933px;top:866px" width="21" height="28" viewBox="0 0 21 28"><path d="M10.5 0 C16.5 0 21 4.5 21 10 C21 14 19 16 17 18 H4 C2 16 0 14 0 10 C0 4.5 4.5 0 10.5 0 Z" fill="#e9aa3a"/><rect x="4.5" y="20" width="12" height="2.2" fill="#bbbbbb"/><rect x="5" y="24" width="11" height="2.2" fill="#bbbbbb"/></svg><svg style="left:2971px;top:184px" width="23" height="20" viewBox="0 0 23 20"><path d="M1.5 9.5 L8 16 L21.5 2" stroke="#499c54" stroke-width="3.6" fill="none"/></svg><div class="abs" style="left:963px;top:413px;width:603px;height:97px;border:6px solid #e8402a;border-radius:9px;z-index:5"></div><svg style="left:0;top:0;z-index:6" width="3050" height="2110" viewBox="0 0 3050 2110"><path d="M1909 342.5 Q1918 341 1918 348 Q1917 352 1911 353.5 L1623.7 435.3 L1633 451 L1575.5 432.7 L1617.5 390 L1616.3 407.6 Z" fill="#e83222"/></svg><div class="abs" style="left:3007px;top:114px;width:2px;height:1912px;background:#2b2b2b"></div><div class="abs" style="left:3009px;top:114px;width:41px;height:1912px;background:#3e3f41"></div><svg style="left:3018px;top:134px" width="22" height="24" viewBox="0 0 22 24"><ellipse cx="11" cy="4" rx="11" ry="3.6" fill="#afb1b3"/><path d="M0 7.5 Q11 12 22 7.5 V11 Q11 15.5 0 11 Z M0 13.5 Q11 18 22 13.5 V17 Q11 21.5 0 17 Z M0 19.5 Q11 24 22 19.5 V21 Q11 25 0 21 Z" fill="#afb1b3"/></svg><div class="t" style="left:2983.0px;top:201.0px;width:94px;height:30px;line-height:30px;text-align:center;font-size:23px;color:#bbbbbb;transform:rotate(90deg)">Database</div><svg style="left:3020px;top:1450px" width="20" height="16" viewBox="0 0 20 16"><path d="M0 16 V0 H4.5 L10 7 L15.5 0 H20 V16 H16.5 V6.5 L10 14 L3.5 6.5 V16 Z" fill="#afb1b3"/></svg><div class="t" style="left:3002.5px;top:1491.5px;width:55px;height:30px;line-height:30px;text-align:center;font-size:23px;color:#bbbbbb;transform:rotate(90deg)">make</div><svg style="left:3018px;top:1575px" width="24" height="28" viewBox="0 0 24 28"><path d="M11 3 C5 3 3 8 3 13 V19 L0 22 H22 L19 19 V13 C19 8 17 3 11 3 Z" fill="#afb1b3"/><rect x="8" y="24" width="6" height="3.5" fill="#afb1b3"/><circle cx="19" cy="5" r="5" fill="#3592c4"/></svg><div class="t" style="left:2966.5px;top:1659.5px;width:127px;height:30px;line-height:30px;text-align:center;font-size:23px;color:#bbbbbb;transform:rotate(90deg)">Notifications</div><svg style="left:3017px;top:1786px" width="26" height="26" viewBox="0 0 26 26"><rect x="0.5" y="0.5" width="25" height="25" rx="1.5" fill="#121212"/><rect x="2.5" y="6" width="21" height="17.5" fill="#121212" stroke="#000" stroke-width="0"/><text x="13" y="19.5" font-size="10" font-family="Liberation Sans" font-weight="bold" fill="#bbbbbb" text-anchor="middle">/API</text><rect x="16" y="2.2" width="2" height="1.5" fill="#888"/><rect x="19.5" y="2.2" width="2" height="1.5" fill="#888"/></svg><div class="t" style="left:2939.0px;top:1896.0px;width:182px;height:30px;line-height:30px;text-align:center;font-size:23px;color:#bbbbbb;transform:rotate(90deg)">API Security Audit</div><div class="abs" style="left:0;top:2026px;width:3050px;height:1px;background:#323232"></div><div class="abs" style="left:0;top:2027px;width:3050px;height:42px;background:#3e3f41"></div><div class="abs" style="left:0;top:2069px;width:3050px;height:1px;background:#4a4d4f"></div><div class="abs" style="left:0;top:2070px;width:3050px;height:40px;background:#3e3f41"></div><svg style="left:62px;top:2036px" width="18" height="26" viewBox="0 0 18 26"><path d="M4 3 V22" stroke="#afb1b3" stroke-width="3"/><circle cx="4" cy="22.5" r="3.3" fill="#afb1b3"/><circle cx="14" cy="6" r="3.3" fill="#afb1b3"/><path d="M14 8 C14 14 5 14 4 18" fill="none" stroke="#afb1b3" stroke-width="3"/></svg><div class="t" style="left:92px;top:2028px;font-size:22px;line-height:40px;color:#bbbbbb">Git</div><svg style="left:164px;top:2038px" width="16" height="20" viewBox="0 0 16 20"><path d="M0 0 L16 10 L0 20 Z" fill="#afb1b3"/></svg><div class="t" style="left:194px;top:2028px;font-size:22px;line-height:40px;color:#bbbbbb">Run</div><svg style="left:274px;top:2040px" width="21" height="18" viewBox="0 0 21 18"><rect x="0" y="0" width="3.5" height="3.5" fill="#afb1b3"/><rect x="6" y="0" width="15" height="3.5" fill="#afb1b3"/><rect x="0" y="7" width="3.5" height="3.5" fill="#afb1b3"/><rect x="6" y="7" width="15" height="3.5" fill="#afb1b3"/><rect x="0" y="14" width="3.5" height="3.5" fill="#afb1b3"/><rect x="6" y="14" width="15" height="3.5" fill="#afb1b3"/></svg><div class="t" style="left:305px;top:2028px;font-size:22px;line-height:40px;color:#bbbbbb">TODO</div><svg style="left:409px;top:2037px" width="21" height="21" viewBox="0 0 21 21"><circle cx="10.5" cy="10.5" r="10.5" fill="#afb1b3"/><rect x="8.8" y="4" width="3.4" height="8" fill="#3e3f41"/><rect x="8.8" y="14" width="3.4" height="3.4" fill="#3e3f41"/></svg><div class="t" style="left:440px;top:2028px;font-size:22px;line-height:40px;color:#bbbbbb">Problems</div><svg style="left:580px;top:2037px" width="22" height="21" viewBox="0 0 22 21"><rect x="0" y="0" width="22" height="21" fill="#afb1b3"/><path d="M3.5 4 L9 8.5 L3.5 13" fill="none" stroke="#3e3f41" stroke-width="2"/><rect x="10" y="14" width="8" height="2.2" fill="#3e3f41"/></svg><div class="t" style="left:613px;top:2028px;font-size:22px;line-height:40px;color:#bbbbbb">Terminal</div><svg style="left:2796px;top:2036px" width="26" height="26" viewBox="0 0 26 26"><rect x="0.5" y="0.5" width="25" height="25" rx="1.5" fill="#121212"/><text x="13" y="19.5" font-size="10" font-family="Liberation Sans" font-weight="bold" fill="#bbbbbb" text-anchor="middle">/API</text><rect x="16" y="2.2" width="2" height="1.5" fill="#888"/><rect x="19.5" y="2.2" width="2" height="1.5" fill="#888"/></svg><div class="t" style="left:2831px;top:2028px;font-size:22px;line-height:40px;color:#bbbbbb">Audit Problems</div><svg style="left:12px;top:2078px" width="24" height="23" viewBox="0 0 24 23"><rect x="6" y="1" width="17" height="16" fill="none" stroke="#afb1b3" stroke-width="2"/><path d="M1 5 V22 H18" fill="none" stroke="#afb1b3" stroke-width="2"/></svg><div class="t" style="left:62px;top:2072px;font-size:22.8px;line-height:38px;color:#bbbbbb">Externally added files can be added to Git // View Files // Always Add // Don't Ask Again (today 8:23 PM)</div><svg style="left:2514px;top:2078px" width="32" height="26" viewBox="0 0 32 26"><path d="M6 19 C2.5 19 0 16.5 0 13.5 C0 10.5 2.5 8.3 5.3 8.2 C6 3.5 9.5 0 14 0 C18.5 0 22 3 22.5 7.8 C25 8.3 27 10.5 27 13 H20 V19 Z" fill="#afb1b3"/><text x="13.5" y="13" font-size="12" font-weight="bold" font-family="Liberation Sans" fill="#3e3f41" text-anchor="middle">?</text><circle cx="24" cy="19" r="5.5" fill="none" stroke="#afb1b3" stroke-width="3.5" stroke-dasharray="2.5 1.8"/><circle cx="24" cy="19" r="2" fill="#afb1b3"/></svg><div class="t" style="left:2566px;top:2072px;font-size:22.5px;line-height:38px;color:#bbbbbb">15:1</div><div class="t" style="left:2631px;top:2072px;font-size:22.5px;line-height:38px;color:#bbbbbb">LF</div><div class="t" style="left:2679px;top:2072px;font-size:22.5px;line-height:38px;color:#bbbbbb">UTF-8</div><div class="t" style="left:2769px;top:2072px;font-size:22.5px;line-height:38px;color:#bbbbbb">Tab</div><div class="t" style="left:2862px;top:2072px;font-size:22.5px;line-height:38px;color:#bbbbbb">master</div><svg style="left:2832px;top:2077px" width="20" height="26" viewBox="0 0 20 26"><path d="M4 3 V22" stroke="#afb1b3" stroke-width="3"/><circle cx="4" cy="3.5" r="3.3" fill="#afb1b3"/><circle cx="4" cy="22.5" r="3.3" fill="#afb1b3"/><circle cx="16" cy="6" r="3.3" fill="#afb1b3"/><path d="M16 8 C16 14 5 14 4 18" fill="none" stroke="#afb1b3" stroke-width="3"/></svg><svg style="left:2952px;top:2080px" width="22" height="22" viewBox="0 0 22 22"><path d="M2 10 V5 A4 4 0 0 1 10 5 V9" fill="none" stroke="#afb1b3" stroke-width="2.5"/><rect x="6" y="10" width="16" height="12" fill="#afb1b3"/></svg><svg style="left:3002px;top:2078px" width="24" height="24" viewBox="0 0 24 24"><circle cx="12" cy="12" r="12" fill="#5a5a5a"/><rect x="10" y="4.5" width="4" height="8" fill="#3e3f41"/><rect x="10" y="15" width="4" height="4" fill="#3e3f41"/></svg></div></body></html>
